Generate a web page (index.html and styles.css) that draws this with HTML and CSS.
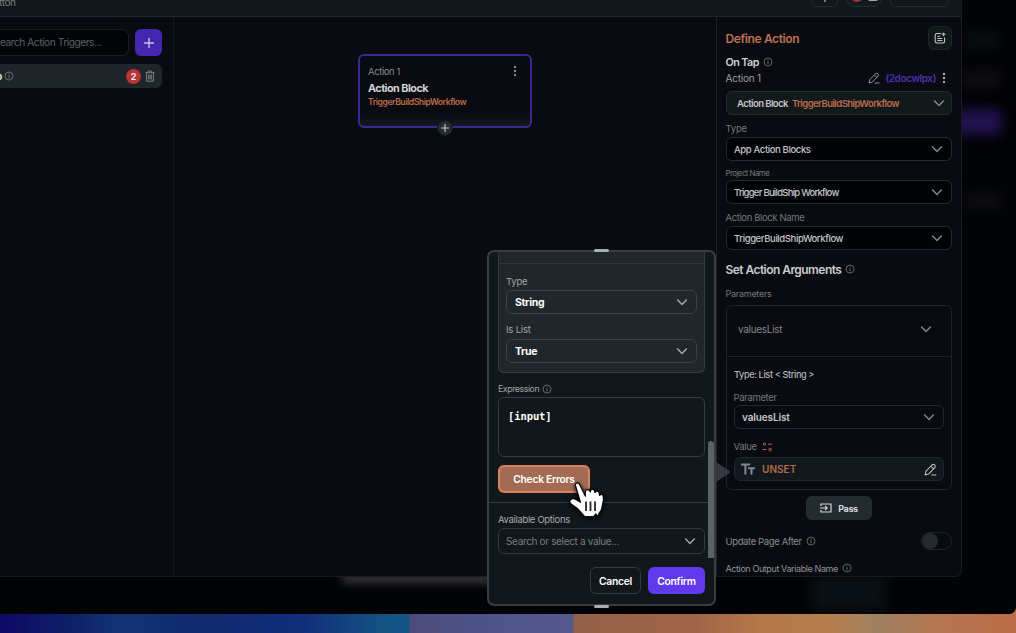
FILE: index.html
```html
<!DOCTYPE html>
<html lang="en">
<head>
<meta charset="utf-8">
<title>Action Flow Editor</title>
<link rel="stylesheet" href="styles.css">
</head>
<body>
<svg class="defs" width="0" height="0">
  <symbol id="chev" viewBox="0 0 12 8"><path d="M1.2 1.4 6 6.4l4.8-5" fill="none" stroke="currentColor" stroke-width="1.4"/></symbol>
  <symbol id="info" viewBox="0 0 10 10"><circle cx="5" cy="5" r="4" fill="none" stroke="currentColor" stroke-width=".8"/><path d="M5 4.4v3M5 2.5v1" stroke="currentColor" stroke-width=".9"/></symbol>
  <symbol id="dots" viewBox="0 0 4 12"><g fill="currentColor"><circle cx="2" cy="2" r="1.2"/><circle cx="2" cy="6" r="1.2"/><circle cx="2" cy="10" r="1.2"/></g></symbol>
  <symbol id="pencil" viewBox="0 0 12 12"><path d="M1 11 1.7 7.8 7.6 1.6Q8.7.8 9.8 1.8T10.2 4L4.2 10.2 1 11ZM6.4 3l2.4 2.4M6.7 11H11.4" fill="none" stroke="currentColor" stroke-width=".95" stroke-linejoin="round"/></symbol>
</svg>
<div class="desktop">
  <div class="window">
    <div class="glow purple"></div><div class="glow band"></div><div class="glow gray"></div><div class="glow low"></div><div class="glow text1"></div><div class="glow text2"></div>
    <div class="dialog">
      <header class="top">
        <span class="crumb">tton</span>
        <div class="topbtns">
          <div class="tbtn one"><i></i></div>
          <div class="tbtn two"><b></b><i></i></div>
          <div class="tbtn three"></div>
        </div>
      </header>
      <div class="main">
        <aside class="side">
          <div class="searchrow">
            <div class="search"><span>earch Action Triggers...</span></div>
            <div class="add"><svg width="10" height="10" viewBox="0 0 10 10"><path d="M5 0v10M0 5h10" stroke="#c9bfe9" stroke-width="1.4"/></svg></div>
          </div>
          <div class="trigger">
            <span class="tap">p</span>
            <svg class="info" width="10" height="10"><use href="#info"/></svg>
            <span class="badge">2</span>
            <svg width="10" height="12" viewBox="0 0 10 12"><path d="M.5 2.6h9M3.2 2.4V1h3.6v1.4M1.6 2.8v8.4h6.8V2.8M3.7 4.5v5M5 4.5v5M6.3 4.5v5" fill="none" stroke="#868b8f" stroke-width=".9"/></svg>
          </div>
        </aside>
        <section class="canvas">
          <div class="node">
            <div class="nodehead"><span>Action 1</span><svg width="4" height="12"><use href="#dots"/></svg></div>
            <div class="nodetitle">Action Block</div>
            <div class="nodesub">TriggerBuildShipWorkflow</div>
            <div class="plus"><svg width="8" height="8" viewBox="0 0 8 8"><path d="M4 0v8M0 4h8" stroke="#c3c7ca" stroke-width="1.2"/></svg></div>
          </div>
        </section>
        <aside class="panel">
          <div class="row define"><span class="h1">Define Action</span>
            <div class="note"><svg width="12" height="12" viewBox="0 0 12 12"><path d="M7.2 1.5H3Q1.2 1.5 1.2 3.3V9Q1.2 11 3 11H8.6Q10.6 11 10.6 9V5.4M3.3 4.3H6M3.3 6.4H8.3M3.3 8.5H8.3M9.7.4v3.8M7.8 2.3h3.8" fill="none" stroke="#c4c8c9" stroke-width="1.05"/></svg></div></div>
          <div class="row ontap"><span>On Tap</span><svg class="info" width="10" height="10"><use href="#info"/></svg></div>
          <div class="row action"><span class="a1">Action 1</span><svg width="12" height="12"><use href="#pencil"/></svg><span class="id">(2docwlpx)</span><svg width="4" height="12"><use href="#dots"/></svg></div>
          <div class="select block"><span class="bname">Action Block</span><span class="orange">TriggerBuildShipWorkflow</span><svg class="chev" width="12" height="8"><use href="#chev"/></svg></div>
          <div class="label l1"><span>Type</span></div>
          <div class="select dark"><span class="s1">App Action Blocks</span><svg class="chev" width="12" height="8"><use href="#chev"/></svg></div>
          <div class="label l2"><span>Project Name</span></div>
          <div class="select dark"><span class="s2">Trigger BuildShip Workflow</span><svg class="chev" width="12" height="8"><use href="#chev"/></svg></div>
          <div class="label l3"><span>Action Block Name</span></div>
          <div class="select dark"><span class="s3">TriggerBuildShipWorkflow</span><svg class="chev" width="12" height="8"><use href="#chev"/></svg></div>
          <div class="row args"><span>Set Action Arguments</span><svg class="info" width="10" height="10"><use href="#info"/></svg></div>
          <div class="label params"><span>Parameters</span></div>
          <div class="box">
            <div class="boxhead"><span>valuesList</span><svg class="chev" width="12" height="8"><use href="#chev"/></svg></div>
            <div class="boxbody">
              <div class="typeline"><span>Type: List &lt; String &gt;</span></div>
              <div class="label pl"><span>Parameter</span></div>
              <div class="select vl"><span>valuesList</span><svg class="chev" width="12" height="8"><use href="#chev"/></svg></div>
              <div class="label val"><span>Value</span><svg width="11" height="10" viewBox="0 0 11 10"><g fill="none" stroke="#b0684a" stroke-width="1"><rect x="1.5" y="1" width="2" height="2.3" rx=".6"/><path d="M6 2.2h4M.5 7.5h4"/><rect x="7" y="6.4" width="2.3" height="2.3" rx=".6"/></g></svg></div>
              <div class="select unset"><svg width="14" height="12" viewBox="0 0 14 12"><path d="M0 1.4h9M4.4 1v10.5M7 5.3h6.8M10.5 5v6.5" fill="none" stroke="#858795" stroke-width="2"/></svg><span>UNSET</span><svg class="edit" width="13" height="13"><use href="#pencil"/></svg></div>
            </div>
          </div>
          <div class="pass"><svg width="12" height="10" viewBox="0 0 12 10"><path d="M1 3V1h10v8H1V7M0 5h7M5 2.9 7.2 5 5 7.1" fill="none" stroke="#d4d7d9" stroke-width="1.2"/></svg><span>Pass</span></div>
          <div class="row update"><span>Update Page After</span><svg class="info" width="10" height="10"><use href="#info"/></svg><div class="toggle"><i></i></div></div>
          <div class="row output"><span>Action Output Variable Name</span><svg class="info" width="10" height="10"><use href="#info"/></svg></div>
        </aside>
      </div>
    </div>
    <div class="popover">
      <div class="scroll">
        <div class="card">
          <div class="strip"></div>
          <div class="plabel"><span class="pt">Type</span></div>
          <div class="select psel"><span>String</span><svg class="chev" width="12" height="8"><use href="#chev"/></svg></div>
          <div class="plabel second"><span class="pi">Is List</span></div>
          <div class="select psel"><span>True</span><svg class="chev" width="12" height="8"><use href="#chev"/></svg></div>
        </div>
        <div class="plabel expr"><span>Expression</span><svg class="info" width="10" height="10"><use href="#info"/></svg></div>
        <div class="code">[input]</div>
        <div class="check"><span>Check Errors</span></div>
      </div>
      <div class="foot">
        <div class="plabel avail"><span>Available Options</span></div>
        <div class="select opt"><span>Search or select a value...</span><svg class="chev" width="12" height="8"><use href="#chev"/></svg></div>
        <div class="buttons"><div class="btn cancel"><span>Cancel</span></div><div class="btn confirm"><span>Confirm</span></div></div>
      </div>
      <i class="bar"></i><i class="grip up"></i><i class="grip down"></i>
      <svg class="arrow" width="15" height="20" viewBox="0 0 15 20"><path d="M0 0 13 8.5Q15 10 13 11.5L0 20Z" fill="#343741"/></svg>
    </div>
    <svg class="cursor" width="40" height="44" viewBox="0 0 40 44"><path d="M7.3 6Q7.5 4 9.2 3.9 11 3.8 11.9 6L17.4 17.2 17.3 12.6Q17.8 10.3 20 10.6 21.7 10.8 22.2 13L22.7 11.3Q23.5 9.8 25.3 10.5 26.7 11.3 27 13.5L28 12.5Q29.5 11.5 30.9 13.2L31.7 16.5Q33.2 14.6 34.7 16 35.5 17.5 35.4 21L33.5 30.7 30.8 34.5V37.5L27.6 35 25.5 37.7H16.8L9.8 29.8 2.8 24.7Q.9 22.7 2.3 21 4.5 18.6 7.8 20.5L12.5 23.3Z" fill="#fff" stroke="#080a0d" stroke-width="1.2" stroke-linejoin="round"/><path d="M18 22.5v9.5M22.5 22.5v9.5M27 22.5v9.5" stroke="#22252a" stroke-width="1.8"/></svg>
  </div>
</div>
</body>
</html>
```
FILE: styles.css
```css
*{box-sizing:border-box}
body{margin:0;font-family:Inter,"Liberation Sans",sans-serif;font-size:10px;color:#9a9da0;background:#000}
span{white-space:nowrap}
svg{flex:none;display:block}
.defs{position:absolute}
.desktop{width:1016px;height:633px;overflow:hidden;background:linear-gradient(90deg,#0d0965 0,#0e1e68 65px,#123277 120px,#10296f 200px,#112d7b 300px,#145181 380px,#155586 409px,#4e4b7b 410px,#4c5289 480px,#55588d 573px,#945f47 574px,#a06548 695px,#b37848 760px,#b47d4e 830px,#9f8060 880px,#b27750 930px,#bc6b47 1016px)}
.window{position:relative;width:1016px;height:614px;background:#020305;border-radius:0 0 7px 0;overflow:hidden}
.glow{position:absolute;filter:blur(6px)}
.purple{left:940px;top:109px;width:62px;height:26px;background:#20124e;border-radius:8px}
.band{left:962px;top:70px;width:38px;height:18px;background:#0e0e12}
.gray{left:342px;top:572px;width:150px;height:11px;background:#36373a;filter:blur(4px)}
.low{left:812px;top:575px;width:74px;height:36px;background:#0b1014}
.text1{left:964px;top:30px;width:36px;height:20px;background:#090b0e}
.text2{left:964px;top:192px;width:38px;height:18px;background:#0b0c11}
.dialog{position:relative;width:962px;height:577px;border:solid #1a1b21;border-width:0 1px 1px 0;border-radius:0 0 7px 0;background:#0a0b10;overflow:hidden;display:flex;flex-direction:column}
.top{height:17px;flex:none;background:#11181b;border-bottom:1px solid #20282b;display:flex;justify-content:space-between;overflow:hidden}
.crumb{font-size:10px;line-height:12px;margin-top:-4px;margin-left:-1px;letter-spacing:-.4px;color:#7b8083}
.topbtns{display:flex;gap:8px;margin-right:12px;margin-top:-12px}
.tbtn{height:19px;border:1px solid #252c30;border-radius:5px;display:flex;justify-content:center;align-items:flex-end}
.one{width:27px}.two{width:36px;border-radius:9px;background:#151a1f;gap:5px}.three{width:59px}
.one i{width:2px;height:5px;background:#70767a;margin-bottom:4px}
.two b{width:12px;height:12px;border-radius:50%;background:#a92d3d;margin-bottom:4px}
.two i{width:10px;height:6px;border-radius:2px;background:#a4a8ab;margin-bottom:5px}
.main{flex:1;display:flex;min-height:0}
.side{width:174px;border-right:1px solid #17191e;padding-top:12px;flex:none}
.searchrow{display:flex;gap:6px;height:27px}
.search{width:129px;border:1px solid #1b1d22;border-left:0;border-radius:0 7px 7px 0;background:#030408;line-height:25px;font-size:10.2px;letter-spacing:-.47px;color:#5d6064}
.add{width:27px;border-radius:6px;background:#4427ae;display:flex;align-items:center;justify-content:center}
.trigger{width:162px;height:24px;margin-top:8px;border-radius:0 6px 6px 0;background:#1f252a;display:flex;align-items:center;padding-right:7px}
.tap{margin-left:-4px;font-weight:700;color:#dadcdd;width:6px}
.trigger .info{margin-left:2px}
.badge{width:15px;height:15px;border-radius:50%;background:#b93434;color:#eee;font:700 9px/15px Inter,sans-serif;text-align:center;margin-left:auto;margin-right:4px}
.info{color:#74787b}
.canvas{flex:1;position:relative}
.node{position:absolute;left:184px;top:37px;width:174px;height:74px;border:2px solid #3a2792;border-radius:6px;padding:8px 13px 0 8px;background:linear-gradient(#0a0b10 80%,#12191c)}
.nodehead{display:flex;justify-content:space-between;align-items:center;height:14px;font-size:9.5px;letter-spacing:-.4px;color:#85888b}
.nodetitle{font-size:10.8px;line-height:18px;font-weight:700;letter-spacing:-.52px;color:#d0d1d3;margin-top:2px}
.nodesub{font-size:8.6px;line-height:11px;font-weight:600;letter-spacing:-.45px;color:#bb6c4a;margin-top:-1px}
.plus{position:absolute;left:77px;top:64px;width:16px;height:16px;border-radius:50%;background:#252c31;border:1px solid #14181c;display:flex;align-items:center;justify-content:center}
.panel{width:245px;flex:none;border-left:1px solid #1d2024;padding:9px 9px 0;overflow:hidden}
.row{display:flex;align-items:center}
.row>span,.label>span{margin-left:-.5px}
.define{height:24px;justify-content:space-between}
.h1{font-size:12px;font-weight:600;letter-spacing:-.38px;color:#bf7150}
.note{width:24px;height:24px;border-radius:6px;background:#12191b;border:1px solid #1f2628;display:flex;align-items:center;justify-content:center}
.ontap{height:16px;margin-top:4px;font-size:10.8px;font-weight:600;letter-spacing:-.6px;color:#ced0d1;gap:4px}
.action{height:16px;font-size:10px;letter-spacing:-.2px}
.a1{flex:1}
.action .id{font-weight:600;color:#4930af;margin:0 6px 0 5px;letter-spacing:-.38px}
.action svg:last-child{margin-right:6px;color:#aaa}
.select{height:24px;border:1px solid #242b2e;border-radius:6px;display:flex;align-items:center;padding:0 8px 0 7px;color:#c4c6c8;font-weight:500;font-size:9.5px;letter-spacing:-.3px}
.chev{margin-left:auto;color:#85888a}
.block{margin-top:5px;background:#12191b;padding:0 6px 0 10px;gap:4px;font-weight:600;letter-spacing:-.56px}
.orange{color:#b96c4d}
.dark{background:#020307}
.s1{letter-spacing:-.38px}.s2{letter-spacing:-.75px}.s3{letter-spacing:-.4px}
.label{display:flex;align-items:center;height:16px;color:#74777b;font-size:9.5px;letter-spacing:-.2px}
.l1{margin-top:5px;margin-bottom:1px}
.l2{margin-top:4px;height:15px;font-size:7.8px;letter-spacing:-.5px}
.l2 span{letter-spacing:-.5px}
.l3{margin-top:5px;margin-bottom:1px;letter-spacing:-.38px}
.args{height:18px;margin-top:10px;font-size:12px;font-weight:600;letter-spacing:-.55px;color:#c9cbce;gap:4px}
.params{height:14px;margin-top:8px;font-size:9px;letter-spacing:-.25px}
.box{height:185px;margin-top:5px;border:1px solid #202327;border-radius:6px}
.boxhead{height:51px;border-bottom:1px solid #202327;display:flex;align-items:center;padding:0 19px 4px 11px;color:#84878b;font-size:10px;letter-spacing:-.3px}
.boxbody{padding:0 7px}
.typeline{height:35px;display:flex;align-items:center;color:#b2b5b8;font-weight:500;font-size:9.2px;letter-spacing:-.4px}
.pl{height:13px;margin-top:-1px;margin-bottom:1px;letter-spacing:-.35px}
.vl{font-weight:600;font-size:10px;letter-spacing:-.12px}
.val{height:21px;margin-top:7px;gap:5px;letter-spacing:-.3px}
.unset{background:#12191c;border-color:#20272a;padding:0 6px}
.unset span{font-weight:600;font-size:10px;color:#b46a49;letter-spacing:.05px;margin-left:7px}
.edit{margin-left:auto}
.pass{height:24px;width:66px;margin:6px auto 0;background:#232a30;border-radius:6px;display:flex;align-items:center;justify-content:center;gap:6px;color:#d4d7d9;font-weight:700;font-size:9px;letter-spacing:-.4px}
.update{height:20px;margin-top:11px;font-size:9.5px;letter-spacing:-.38px;gap:4px;color:#898c8f}
.toggle{width:31px;height:18px;border:1px solid #1d2327;border-radius:9px;margin-left:auto}
.toggle i{display:block;width:16px;height:16px;border-radius:50%;background:#23292e}
.output{height:18px;margin-top:8px;font-size:9px;gap:4px;letter-spacing:-.4px;color:#909396}
.popover{position:absolute;left:487px;top:250px;width:229px;height:356px;border:2px solid #3a3e42;border-radius:7px;background:#11171a}
.scroll{height:251px;border-bottom:1px solid #353b40;padding:0 9px}
.card{height:121px;border:1px solid #343b3f;border-top:0;border-radius:0 0 6px 6px;background:#20272a;padding:0 7px}
.strip{height:12px;border-bottom:1px solid #30373b;margin:0 -7px}
.plabel{height:26px;padding-top:9px;font-size:9.5px;letter-spacing:-.2px;line-height:18px;color:#a0a4a7;display:flex;align-items:center}
.plabel.second{height:25px;padding-top:6px}
.psel{border-color:#394046;color:#fff;font-weight:700;font-size:10.5px;letter-spacing:-.3px;padding:0 8px}
.psel .chev,.opt .chev{color:#a6aaad}
.plabel.expr{height:24px;padding-top:7px;font-size:8.8px;gap:3px;letter-spacing:-.45px}
.code{height:60px;border:1px solid #353c40;border-radius:6px;padding:11px 9px;color:#fff;font:700 10.5px/14px "DejaVu Sans Mono",monospace;letter-spacing:-.1px}
.check{width:92px;height:28px;margin-top:8px;background:#a46b53;border:2px solid #d98361;border-radius:6px;color:#fff;font-weight:600;font-size:10.3px;letter-spacing:-.27px;display:flex;align-items:center;justify-content:center}
.foot{padding:0 9px}
.plabel.avail{height:25px;padding-top:8px;color:#a8abae;letter-spacing:-.34px}
.opt{height:26px;border-color:#333a3f;font-weight:400;color:#777c80;font-size:10px;letter-spacing:-.34px}
.buttons{display:flex;gap:7px;justify-content:flex-end;margin-top:13px}
.btn{height:27px;border-radius:6px;display:flex;align-items:center;justify-content:center;color:#fff;font-weight:600;font-size:10.3px;letter-spacing:-.25px}
.cancel{width:51px;border:1px solid #353b40}
.confirm{width:57px;background:#6039ec}
.bar{position:absolute;left:219px;top:189px;width:6px;height:117px;border-radius:3px 3px 0 0;background:#5c6165}
.grip{position:absolute;left:105px;width:15px;height:3px;border-radius:2px;background:#aaadb1}
.up{top:-3px}.down{top:353px}
.arrow{position:absolute;left:227px;top:210px}
.cursor{position:absolute;left:568px;top:479px;filter:drop-shadow(0 1px 2px #000)}
```
